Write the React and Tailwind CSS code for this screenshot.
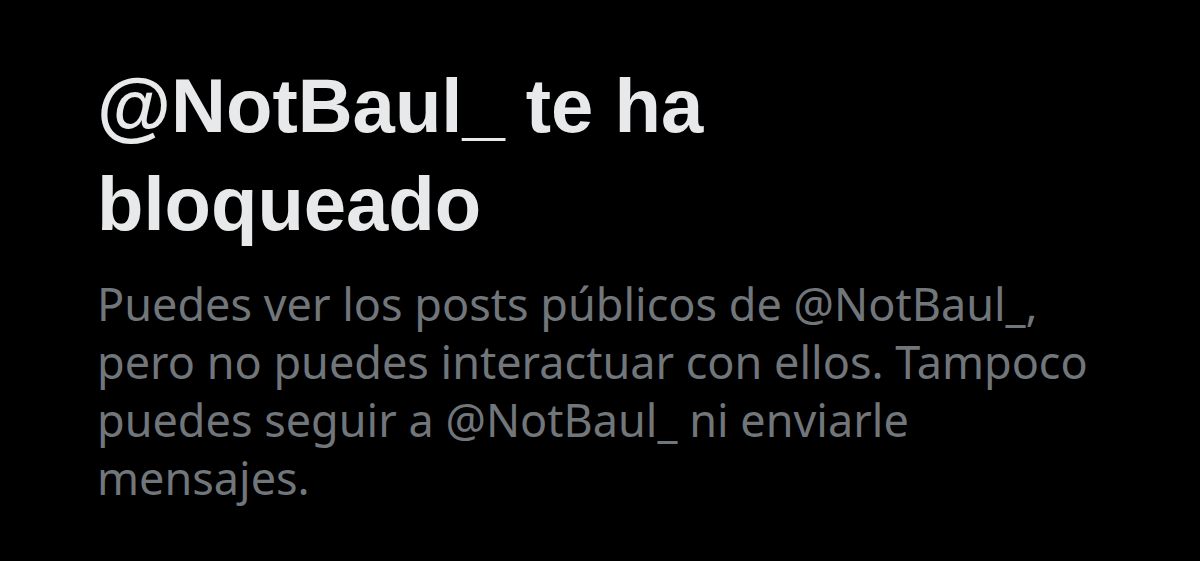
export default function App() {
    return (
        <div className="w-[1200px] h-[561px] bg-black overflow-hidden pl-[97px] pt-[57px]">
            <h1 className="text-[#e7e9ea] text-[76px] leading-[98px] font-bold max-w-[720px] font-['Liberation_Sans',Arial,sans-serif]">
                @NotBaul_ te ha bloqueado
            </h1>
            <p className="text-[#71767b] text-[45px] leading-[58px] mt-[22px] max-w-[1000px] font-['Noto_Sans',sans-serif]">
                Puedes ver los posts públicos de @NotBaul_, pero no puedes interactuar con ellos. Tampoco puedes seguir a @NotBaul_ ni enviarle mensajes.
            </p>
        </div>
    );
}
